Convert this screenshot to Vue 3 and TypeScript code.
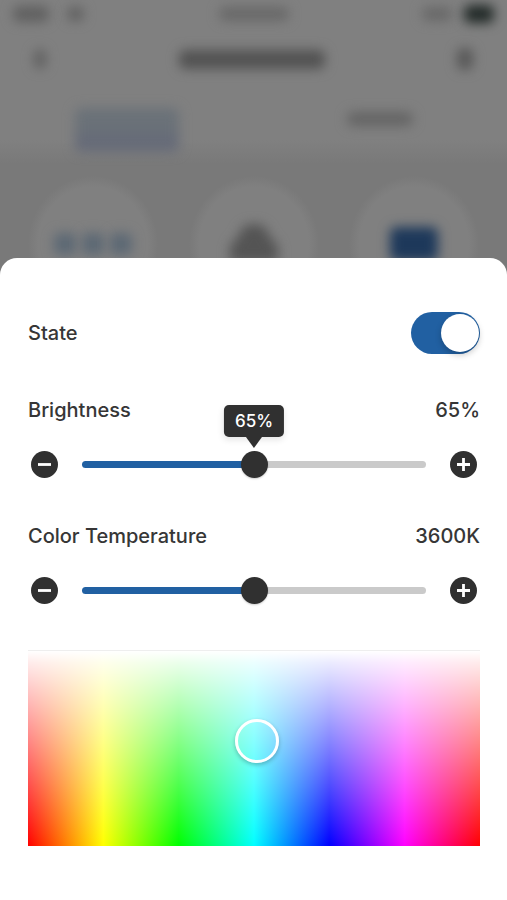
<script setup lang="ts">
import { computed, reactive, ref } from 'vue'

interface Level {
  id: string
  label: string
  unit: string
  min: number
  max: number
  step: number
  value: number
  tip: boolean
}

const isOn = ref(true)

const levels = reactive<Level[]>([
  { id: 'brightness', label: 'Brightness', unit: '%', min: 30, max: 100, step: 1, value: 65, tip: true },
  { id: 'temperature', label: 'Color Temperature', unit: 'K', min: 2700, max: 4500, step: 100, value: 3600, tip: false },
])

const fraction = (l: Level): number => (l.value - l.min) / (l.max - l.min)

function nudge(l: Level, direction: number): void {
  l.value = Math.min(l.max, Math.max(l.min, l.value + direction * l.step))
}

const picked = reactive({ x: 0.507, y: 0.464 })
const handlePosition = computed(() => ({ left: `${picked.x * 100}%`, top: `${picked.y * 100}%` }))

function pick(event: MouseEvent): void {
  const box = (event.currentTarget as HTMLElement).getBoundingClientRect()
  picked.x = (event.clientX - box.left) / box.width
  picked.y = (event.clientY - box.top) / box.height
}
</script>

<template>
  <div class="screen">
    <div class="backdrop" aria-hidden="true">
      <div class="haze">
        <div class="status">
          <span class="side"><i class="signal" /><i class="wifi" /></span>
          <i class="clock" />
          <span class="side end"><i class="percent" /><i class="battery" /></span>
        </div>
        <div class="nav">
          <i class="back" />
          <i class="title" />
          <i class="edit" />
        </div>
        <div class="tabs">
          <span class="tab active"><i /></span>
          <span class="tab"><i /></span>
        </div>
        <div class="tiles">
          <span class="tile dots"><i /><i /><i /></span>
          <span class="tile">
            <svg width="56" height="48" viewBox="0 0 56 48">
              <path d="M28 4c9 0 14 5 15 12l9 10v16H4V26l9-10C14 9 19 4 28 4z" fill="#545454" />
            </svg>
          </span>
          <span class="tile"><i class="device" /></span>
        </div>
      </div>
    </div>

    <main class="sheet">
      <div class="row state">
        <label for="state">State</label>
        <input id="state" v-model="isOn" class="switch" type="checkbox" role="switch" />
      </div>

      <section v-for="l in levels" :key="l.id" class="level">
        <div class="row">
          <label :for="l.id">{{ l.label }}</label>
          <span>{{ l.value }}{{ l.unit }}</span>
        </div>
        <div class="control">
          <button class="round" type="button" :aria-label="`Decrease ${l.label}`" @click="nudge(l, -1)">
            <svg width="27" height="27" viewBox="0 0 27 27">
              <path d="M7 13.5h13" stroke="#fff" stroke-width="2.8" />
            </svg>
          </button>
          <div class="slider" :style="{ '--fill': `${fraction(l) * 100}%` }">
            <input :id="l.id" v-model.number="l.value" type="range" :min="l.min" :max="l.max" :step="l.step" />
            <output v-if="l.tip" class="tip" :for="l.id">{{ l.value }}{{ l.unit }}</output>
          </div>
          <button class="round" type="button" :aria-label="`Increase ${l.label}`" @click="nudge(l, 1)">
            <svg width="27" height="27" viewBox="0 0 27 27">
              <path d="M7 13.5h13M13.5 7v13" stroke="#fff" stroke-width="2.8" />
            </svg>
          </button>
        </div>
      </section>

      <div class="palette" @click="pick">
        <button class="handle" type="button" aria-label="Color" :style="handlePosition" @click.stop />
      </div>
    </main>
  </div>
</template>

<style>
body {
  margin: 0;
  background: #fff;
}
</style>

<style scoped>
.screen {
  display: flex;
  flex-direction: column;
  min-height: 100vh;
  font-family: Inter, "Liberation Sans", sans-serif;
  font-size: 20px;
  font-weight: 500;
  line-height: 24px;
  color: #363636;
}

.backdrop {
  overflow: hidden;
  background: linear-gradient(#808080 140px, #797979 164px);
}

.haze {
  height: 310px;
}

.haze i,
.haze svg {
  display: block;
  border-radius: 6px;
  filter: blur(6px);
}

.status,
.nav {
  display: flex;
  align-items: center;
  justify-content: space-between;
}

.status {
  height: 28px;
  padding: 0 13px;
}

.side {
  display: flex;
  flex: 1;
  align-items: center;
  gap: 18px;
}

.end {
  justify-content: flex-end;
  gap: 12px;
}

.signal {
  width: 36px;
  height: 16px;
  background: #606060;
}

.wifi {
  width: 17px;
  height: 14px;
  background: #606060;
}

.clock {
  width: 70px;
  height: 14px;
  background: #686868;
}

.percent {
  width: 30px;
  height: 14px;
  background: #686868;
}

.battery {
  width: 30px;
  height: 18px;
  background: #222a28;
}

.nav {
  height: 62px;
  padding: 0 34px;
}

.back {
  width: 12px;
  height: 20px;
  background: #606060;
}

.title {
  width: 146px;
  height: 19px;
  background: #525252;
}

.edit {
  width: 16px;
  height: 22px;
  background: #585858;
}

.tabs {
  display: flex;
  height: 62px;
}

.tab {
  display: flex;
  flex: 1;
  flex-direction: column;
  align-items: center;
  padding-top: 22px;
}

.tab i {
  width: 66px;
  height: 14px;
  background: #646464;
}

.tab.active {
  padding-top: 18px;
}

.tab.active i {
  width: 104px;
  height: 44px;
  background: linear-gradient(#6a7178 20px, #666b78 30px);
}

.tiles {
  display: flex;
  justify-content: space-between;
  padding: 24px 28px;
}

.tile {
  display: flex;
  align-items: center;
  justify-content: center;
  width: 130px;
  height: 136px;
  border-radius: 50%;
  background: radial-gradient(closest-side, #808080 84%, rgb(128 128 128 / 0%));
}

.dots {
  gap: 6px;
}

.dots i {
  width: 22px;
  height: 22px;
  background: #5c6874;
}

.device {
  width: 48px;
  height: 34px;
  background: #1d385a;
}

.sheet {
  position: relative;
  flex: 1;
  margin-top: -52px;
  padding: 54px 27px 54px 28px;
  border-radius: 17px 17px 0 0;
  background: #fff;
}

.row {
  display: flex;
  align-items: center;
  justify-content: space-between;
}

.state {
  margin-bottom: 44px;
}

.level {
  margin-bottom: 46px;
}

.switch {
  appearance: none;
  display: flex;
  align-items: center;
  width: 69px;
  height: 42px;
  margin: 0;
  padding: 0 1px;
  border-radius: 21px;
  background: #c8c8c8;
  cursor: pointer;
}

.switch::before {
  content: "";
  width: 38px;
  height: 38px;
  border-radius: 50%;
  background: #fff;
  box-shadow: 0 3px 6px rgb(0 0 0 / 22%);
}

.switch:checked {
  justify-content: flex-end;
  background: #2160a2;
}

.control {
  display: flex;
  align-items: center;
  gap: 24px;
  margin-top: 29px;
  padding: 0 3px;
}

.round {
  flex: none;
  width: 27px;
  height: 27px;
  padding: 0;
  border: 0;
  border-radius: 50%;
  background: #303030;
  cursor: pointer;
}

.round svg {
  display: block;
}

.slider {
  position: relative;
  flex: 1;
  min-width: 0;
}

.slider input {
  appearance: none;
  display: block;
  width: 100%;
  height: 27px;
  margin: 0;
  background: transparent;
  cursor: pointer;
}

.slider input::-webkit-slider-runnable-track {
  height: 7px;
  border-radius: 4px;
  background: linear-gradient(90deg, #2160a2 var(--fill), #cacaca var(--fill));
}

.slider input::-webkit-slider-thumb {
  appearance: none;
  width: 27px;
  height: 27px;
  margin-top: -10px;
  border-radius: 50%;
  background: #303030;
  box-shadow: 0 1px 2px rgb(0 0 0 / 20%);
}

.tip {
  position: absolute;
  bottom: 41px;
  left: var(--fill);
  padding: 4px 11px;
  border-radius: 5px;
  background: #303030;
  box-shadow: 0 3px 6px rgb(0 0 0 / 10%);
  color: #fff;
  font-size: 17px;
  transform: translateX(-50%);
}

.tip::after {
  content: "";
  position: absolute;
  top: 100%;
  left: 50%;
  margin-left: -8px;
  border: 8px solid transparent;
  border-top: 11px solid #303030;
  border-bottom: 0;
}

.palette {
  position: relative;
  height: 195px;
  border-top: 1px solid #eee;
  background:
    linear-gradient(#fff, rgb(255 255 255 / 92%) 6%, rgb(255 255 255 / 78%) 20%, rgb(255 255 255 / 0%)),
    linear-gradient(90deg, #f00, #ff0, #0f0, #0ff, #00f, #f0f, #f00);
}

.handle {
  position: absolute;
  width: 44px;
  height: 44px;
  padding: 0;
  border: 3px solid #fff;
  border-radius: 50%;
  background: transparent;
  box-shadow: 0 2px 4px rgb(0 0 0 / 25%);
  transform: translate(-50%, -50%);
  cursor: pointer;
}
</style>
